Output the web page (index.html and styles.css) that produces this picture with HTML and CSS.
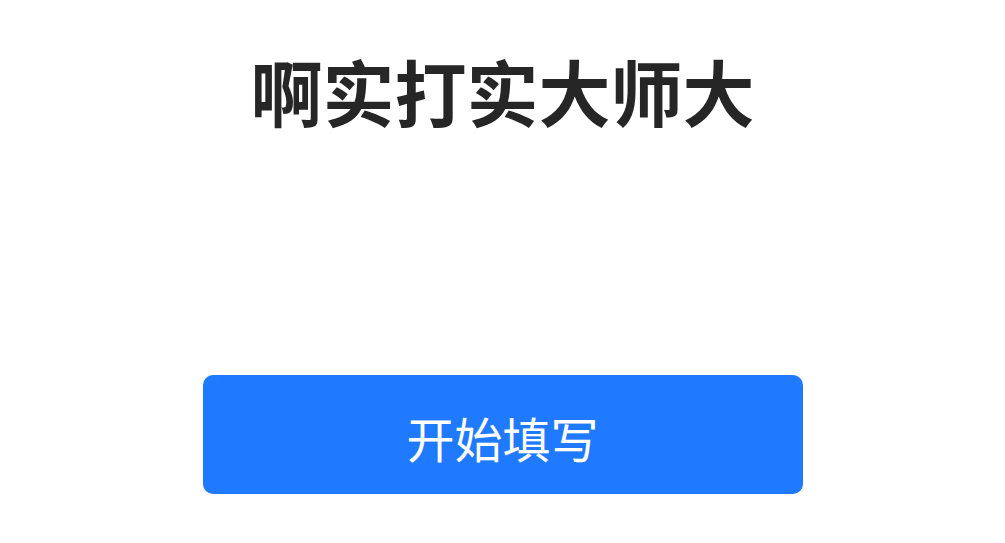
FILE: index.html
```html
<!DOCTYPE html>
<html lang="zh">
<head>
<meta charset="utf-8">
<link rel="stylesheet" href="styles.css">
</head>
<body>
<main class="page">
  <h1 class="title">啊实打实大师大</h1>
  <button class="start">开始填写</button>
</main>
</body>
</html>
```
FILE: styles.css
```css
html, body {
  margin: 0;
  padding: 0;
  background: #ffffff;
}
.page {
  display: flex;
  flex-direction: column;
  align-items: center;
  padding-top: 45px;
  font-family: "Noto Sans CJK SC", "Noto Sans", sans-serif;
}
.title {
  margin: 0;
  font-size: 72px;
  line-height: 90px;
  font-weight: 700;
  color: #262626;
}
.start {
  margin-top: 240px;
  width: 600px;
  height: 119px;
  padding: 5px 0 0;
  border: none;
  border-radius: 10px;
  background: #1f7aff;
  color: #ffffff;
  font-family: "Noto Sans CJK SC", "Noto Sans", sans-serif;
  font-size: 48px;
  font-weight: 400;
  cursor: pointer;
}
```
